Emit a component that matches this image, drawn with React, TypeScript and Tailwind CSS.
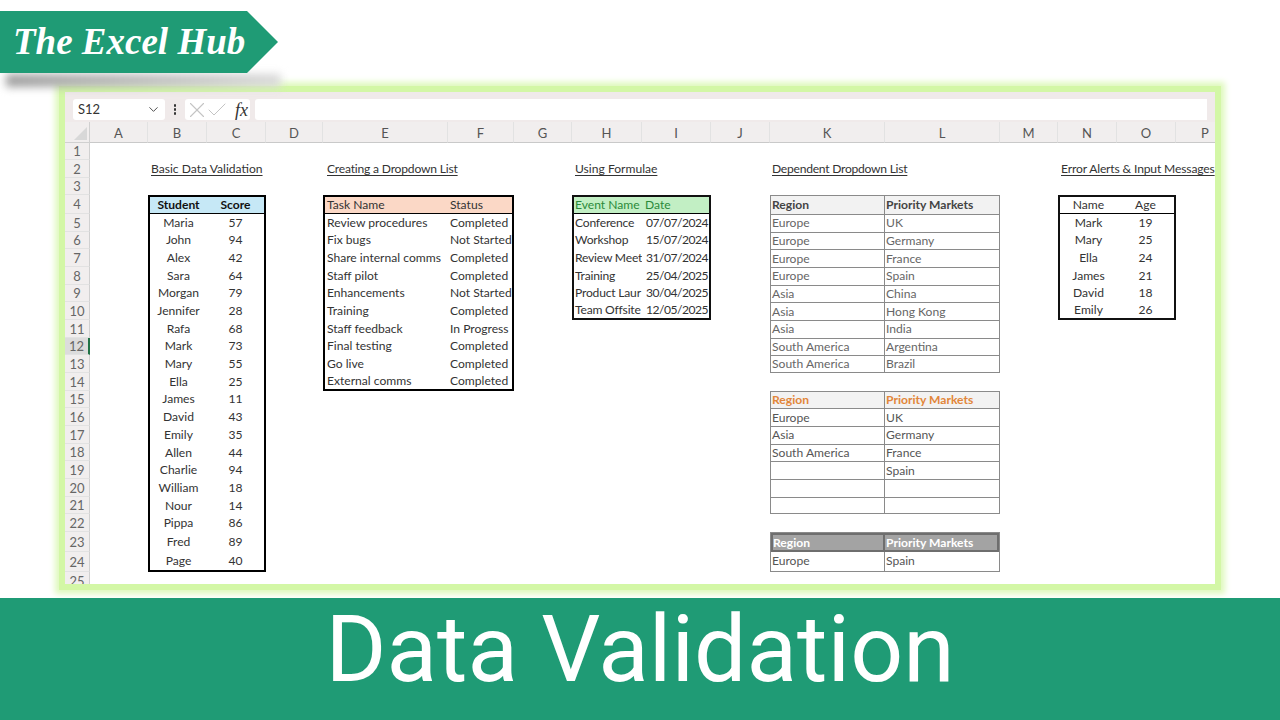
import { Check, ChevronDown, X } from "lucide-react"

const cols = ["A", "B", "C", "D", "E", "F", "G", "H", "I", "J", "K", "L", "M", "N", "O", "P"]
const rows = Array.from({ length: 25 }, (_, i) => i + 1)

const students = [
  ["Maria", "57"], ["John", "94"], ["Alex", "42"], ["Sara", "64"], ["Morgan", "79"], ["Jennifer", "28"], ["Rafa", "68"],
  ["Mark", "73"], ["Mary", "55"], ["Ella", "25"], ["James", "11"], ["David", "43"], ["Emily", "35"], ["Allen", "44"],
  ["Charlie", "94"], ["William", "18"], ["Nour", "14"], ["Pippa", "86"], ["Fred", "89"], ["Page", "40"],
]

const tasks = [
  ["Review procedures", "Completed"], ["Fix bugs", "Not Started"], ["Share internal comms", "Completed"], ["Staff pilot", "Completed"],
  ["Enhancements", "Not Started"], ["Training", "Completed"], ["Staff feedback", "In Progress"], ["Final testing", "Completed"],
  ["Go live", "Completed"], ["External comms", "Completed"],
]

const events = [
  ["Conference", "07/07/2024"], ["Workshop", "15/07/2024"], ["Review Meet", "31/07/2024"],
  ["Training", "25/04/2025"], ["Product Laur", "30/04/2025"], ["Team Offsite", "12/05/2025"],
]

const markets = [
  ["Europe", "UK"], ["Europe", "Germany"], ["Europe", "France"], ["Europe", "Spain"], ["Asia", "China"],
  ["Asia", "Hong Kong"], ["Asia", "India"], ["South America", "Argentina"], ["South America", "Brazil"],
]

const lists = [["Europe", "UK"], ["Asia", "Germany"], ["South America", "France"], ["", "Spain"], ["", ""], ["", ""]]

const people = [["Mark", "19"], ["Mary", "25"], ["Ella", "24"], ["James", "21"], ["David", "18"], ["Emily", "26"]]

function Title({ text, className }: { text: string; className: string }) {
  return <div className={`${className} row-start-3 whitespace-nowrap pl-[3px] leading-[18px] underline underline-offset-2`}>{text}</div>
}

function Cell({ children, className = "" }: { children?: React.ReactNode; className?: string }) {
  return <div className={`flex items-center overflow-hidden whitespace-nowrap ${className}`}>{children}</div>
}

export default function App() {
  return (
    <div className="relative h-[720px] w-[1280px] overflow-hidden bg-white font-['Lato',sans-serif]">
      <div className="h-[598px] pl-[59px] pt-[86px]">
        <div className="h-[504px] w-[1162px] border-[6px] border-[#d3f7a6] shadow-[0_0_6px_4px_#dff9bd]">
          <div className="flex h-[30px] items-start bg-[#f0eaea] px-[8px] pt-[7px]">
            <div className="flex h-[21px] w-[92px] items-center justify-between rounded-[3px] bg-white pl-[5px] pr-[4px] text-[13px] text-[#333]">
              S12
              <ChevronDown size={15} strokeWidth={1.5} className="text-[#444]" />
            </div>
            <div className="flex h-[21px] w-[20px] flex-col items-center justify-center gap-[1.5px]">
              <span className="size-[2.5px] rounded-full bg-[#333]" />
              <span className="size-[2.5px] rounded-full bg-[#333]" />
              <span className="size-[2.5px] rounded-full bg-[#333]" />
            </div>
            <div className="flex h-[21px] w-[65px] items-center rounded-[3px] bg-white text-[#c4c4c4]">
              <X size={26} strokeWidth={1} className="-ml-[1.5px] shrink-0" />
              <Check size={24} strokeWidth={1} className="-ml-[4.5px] shrink-0" />
              <span className="ml-[6px] font-['Liberation_Serif',serif] text-[18px] italic leading-none text-[#333]">fx</span>
            </div>
            <div className="ml-[5px] h-[21px] flex-1 rounded-l-[3px] bg-white" />
          </div>

          <div className="grid h-[462px] grid-cols-[25px_58px_59px_59px_57px_125px_66px_58px_70px_69px_59px_115px_115px_58px_59px_59px_59px] grid-rows-[21px_17px_18px_17px_19px_repeat(17,17.68px)_18px_19.5px_20px_18px] overflow-hidden text-[12.1px] text-[#333]">
            <div className="relative border-b border-r border-[#d0d0d0] bg-[#f1eeee]">
              <div className="absolute bottom-[2px] right-[2px] size-0 border-b-[13px] border-l-[13px] border-b-[#d8d8d8] border-l-transparent" />
            </div>
            {cols.map((c) => (
              <div key={c} className="flex items-center justify-center border-b border-r border-[#c9c9c9] border-r-[#e2e2e2] bg-[#f1eeee] pt-[3px] text-[13px] text-[#555]">
                {c}
              </div>
            ))}
            {rows.map((r) => (
              <div
                key={r}
                className={`col-start-1 flex items-center justify-center border-b border-b-[#e2e2e2] pt-[2px] text-[13px] text-[#666] ${r === 12 ? "border-r-2 border-r-[#217346] bg-[#dcdcdc]" : "border-r border-r-[#d0d0d0] bg-[#f1eeee]"}`}
                style={{ gridRowStart: r + 1 }}
              >
                {r}
              </div>
            ))}

            <Title text="Basic Data Validation" className="col-start-3 col-span-2" />
            <Title text="Creating a Dropdown List" className="col-start-6 col-span-2 ml-[1px] tracking-[-0.2px]" />
            <Title text="Using Formulae" className="col-start-9 col-span-2" />
            <Title text="Dependent Dropdown List" className="col-start-12 col-span-2 -ml-[1px] tracking-[-0.25px]" />
            <Title text="Error Alerts & Input Messages" className="col-start-15 col-span-3 tracking-[-0.15px]" />

            <div className="col-start-3 col-end-5 row-start-5 row-end-[26] grid grid-cols-subgrid grid-rows-subgrid border-2 border-black text-center">
              <Cell className="justify-center border-b border-black bg-[#c6e8f6] font-bold text-[#111]">Student</Cell>
              <Cell className="justify-center border-b border-black bg-[#c6e8f6] font-bold text-[#111]">Score</Cell>
              {students.map(([name, score]) => (
                <div key={name} className="contents">
                  <Cell className="justify-center">{name}</Cell>
                  <Cell className="justify-center">{score}</Cell>
                </div>
              ))}
            </div>

            <div className="col-start-6 col-end-8 row-start-5 row-end-[16] grid grid-cols-subgrid grid-rows-subgrid border-2 border-black">
              <Cell className="border-b border-black bg-[#fbd8c6] pl-[2px]">Task Name</Cell>
              <Cell className="border-b border-black bg-[#fbd8c6] pl-[2px]">Status</Cell>
              {tasks.map(([task, status]) => (
                <div key={task} className="contents">
                  <Cell className="pl-[2px]">{task}</Cell>
                  <Cell className="pl-[2px]">{status}</Cell>
                </div>
              ))}
            </div>

            <div className="col-start-9 col-end-11 row-start-5 row-end-[12] grid grid-cols-subgrid grid-rows-subgrid border-2 border-[#111]">
              <Cell className="border-b border-black bg-[#c2efc4] pl-[1px] text-[#2b8a3a]">Event Name</Cell>
              <Cell className="border-b border-black bg-[#c2efc4] pl-[3px] text-[#2b8a3a]">Date</Cell>
              {events.map(([event, date]) => (
                <div key={event} className="contents">
                  <Cell className="pl-[1px] tracking-[-0.2px]">{event}</Cell>
                  <Cell className="justify-end pr-[1px] tracking-[-0.5px]">{date}</Cell>
                </div>
              ))}
            </div>

            <div className="col-start-12 col-end-14 row-start-5 row-end-[15] grid grid-cols-subgrid grid-rows-subgrid border border-[#8a8a8a]">
              <Cell className="border-r border-[#8a8a8a] bg-[#f2f2f2] pl-[1px] font-bold text-[#444]">Region</Cell>
              <Cell className="bg-[#f2f2f2] pl-[1px] font-bold text-[#444]">Priority Markets</Cell>
              {markets.map(([region, market]) => (
                <div key={region + market} className="contents">
                  <Cell className="border-r border-t border-[#8a8a8a] pl-[1px] text-[#666]">{region}</Cell>
                  <Cell className="border-t border-[#8a8a8a] pl-[1px] text-[#666]">{market}</Cell>
                </div>
              ))}
            </div>

            <div className="col-start-12 col-end-14 row-start-[16] row-end-[23] grid grid-cols-subgrid grid-rows-subgrid border border-[#8a8a8a]">
              <Cell className="border-r border-[#8a8a8a] bg-[#f2f2f2] pl-[1px] font-bold text-[#e2863a]">Region</Cell>
              <Cell className="bg-[#f2f2f2] pl-[1px] font-bold text-[#e2863a]">Priority Markets</Cell>
              {lists.map(([region, market], i) => (
                <div key={i} className="contents">
                  <Cell className="border-r border-t border-[#8a8a8a] pl-[1px] text-[#555]">{region}</Cell>
                  <Cell className="border-t border-[#8a8a8a] pl-[1px] text-[#555]">{market}</Cell>
                </div>
              ))}
            </div>

            <div className="col-start-12 col-end-14 row-start-[24] row-end-[26] grid grid-cols-subgrid grid-rows-subgrid border border-[#8a8a8a]">
              <Cell className="border-2 border-[#6e6e6e] bg-[#a3a3a3] font-bold text-white">Region</Cell>
              <Cell className="border-2 border-l-0 border-[#6e6e6e] bg-[#a3a3a3] pl-[1px] font-bold text-white">Priority Markets</Cell>
              <Cell className="border-r border-[#8a8a8a] pl-[1px] text-[#555]">Europe</Cell>
              <Cell className="pl-[1px] text-[#555]">Spain</Cell>
            </div>

            <div className="col-start-15 col-end-17 row-start-5 row-end-[12] grid grid-cols-subgrid grid-rows-subgrid border-2 border-[#111]">
              <Cell className="justify-center border-b border-black">Name</Cell>
              <Cell className="justify-center border-b border-black">Age</Cell>
              {people.map(([name, age]) => (
                <div key={name} className="contents">
                  <Cell className="justify-center">{name}</Cell>
                  <Cell className="justify-center">{age}</Cell>
                </div>
              ))}
            </div>
          </div>
        </div>
      </div>

      <div className="flex h-[122px] items-start justify-center bg-[#1f9b75] pt-[2px] font-['Roboto',sans-serif] text-[93px] leading-[100px] text-white">
        Data Validation
      </div>

      {/* logo ribbon sits over the sheet */}
      <div className="absolute left-[6px] top-[74px] h-[13px] w-[275px] bg-linear-to-r from-[#a0a0a0] to-[#dadada] blur-[4px]" />
      <div className="absolute left-0 top-[11px] flex h-[62px] w-[278px] items-center bg-[#1f9b75] pl-[13px] font-['Liberation_Serif',serif] text-[37px] font-bold italic text-white [clip-path:polygon(0_0,247px_0,100%_50%,247px_100%,0_100%)]">
        The Excel Hub
      </div>
    </div>
  )
}
